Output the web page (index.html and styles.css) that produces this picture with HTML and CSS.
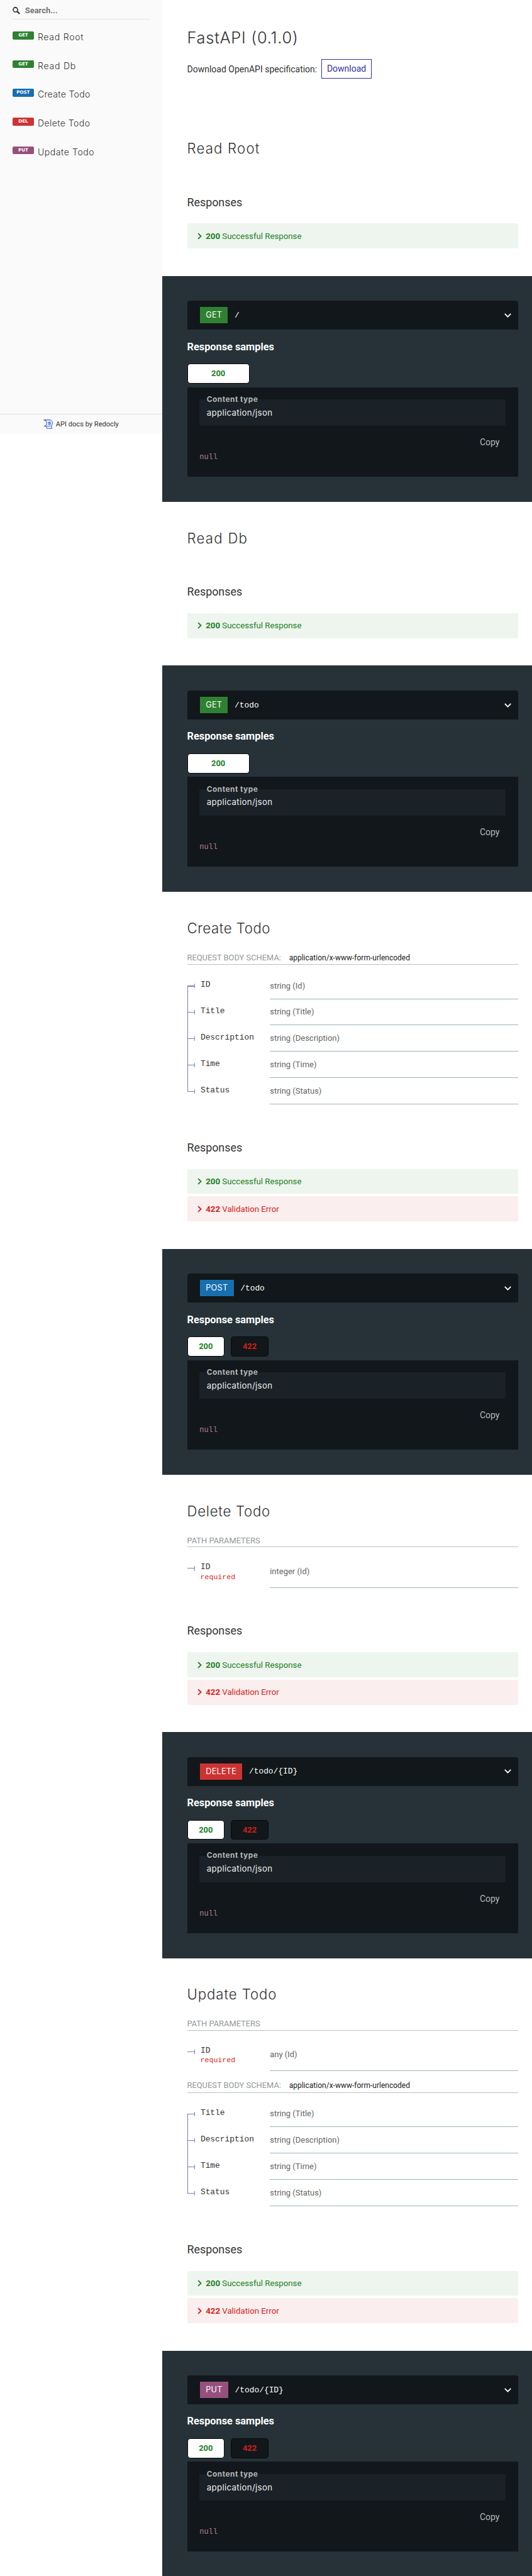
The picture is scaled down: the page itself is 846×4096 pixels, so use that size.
FILE: index.html
```html
<!DOCTYPE html>
<html lang="en">
<head>
<meta charset="utf-8">
<title>FastAPI - ReDoc</title>
<link rel="stylesheet" href="styles.css">
</head>
<body>
<svg class="defs" width="0" height="0">
  <symbol id="right" viewBox="0 0 9 14"><path d="M1.4 1.4 7 7 1.4 12.6" fill="none" stroke="currentColor" stroke-width="2.3"/></symbol>
  <symbol id="down" viewBox="0 0 14 9"><path d="M1 1.2 7 7.2 13 1.2" fill="none" stroke="currentColor" stroke-width="2.2"/></symbol>
</svg>
<div class="layout">
  <aside class="sidebar">
    <div class="search">
      <svg class="search-icon" viewBox="0 0 15 15"><circle cx="5.6" cy="5.6" r="4.5" fill="none" stroke="#222" stroke-width="1.9"/><path d="M8.9 8.9 14 14" stroke="#222" stroke-width="2.6"/></svg>
      <span>Search...</span>
    </div>
    <nav class="menu">
      <a class="item"><span class="tag get">GET</span><span class="label t-root">Read Root</span></a>
      <a class="item"><span class="tag get">GET</span><span class="label t-db">Read Db</span></a>
      <a class="item"><span class="tag post">POST</span><span class="label t-create">Create Todo</span></a>
      <a class="item"><span class="tag delete">DEL</span><span class="label t-delete">Delete Todo</span></a>
      <a class="item"><span class="tag put">PUT</span><span class="label t-update">Update Todo</span></a>
    </nav>
    <div class="credit">
      <svg class="logo" viewBox="0 0 19 19" fill="none" stroke="#2f66d8" stroke-width="1.3"><path d="M.5.8H12c3.600 0 6.200 2.600 6.200 6.200S15.500 13.600 12 13.600H1.200C4.600 12.800 6.700 10.400 6.700 7.200S4.400 1.300.5.8Z"/><path d="M9.400 5.200h5.200M9.400 7.400h6M9.400 9.600h5.200"/><path d="M5.300 13.800c1.200 1.300 1.400 4.300 3.300 4.300h9.300c-1.800-.8-1.800-2.800-1.700-5.400"/></svg>
      <span>API docs by Redocly</span>
    </div>
  </aside>
  <main class="content">
    <header class="intro">
      <h1>FastAPI (0.1.0)</h1>
      <p>Download OpenAPI specification:<a class="download">Download</a></p>
    </header>

    <section class="doc">
      <h2 class="t-root">Read Root</h2>
      <h3>Responses</h3>
      <div class="response ok"><svg><use href="#right"/></svg><b>200</b><span>Successful Response</span></div>
    </section>
    <section class="panel">
      <div class="endpoint"><span class="verb get">GET</span><code>/</code><svg><use href="#down"/></svg></div>
      <h4>Response samples</h4>
      <div class="tabs"><span class="tab single">200</span></div>
      <div class="sample"><div class="type"><b>Content type</b><span>application/json</span></div><div class="copy">Copy</div><code>null</code></div>
    </section>

    <section class="doc">
      <h2 class="t-db">Read Db</h2>
      <h3>Responses</h3>
      <div class="response ok"><svg><use href="#right"/></svg><b>200</b><span>Successful Response</span></div>
    </section>
    <section class="panel">
      <div class="endpoint"><span class="verb get">GET</span><code>/todo</code><svg><use href="#down"/></svg></div>
      <h4>Response samples</h4>
      <div class="tabs"><span class="tab single">200</span></div>
      <div class="sample"><div class="type"><b>Content type</b><span>application/json</span></div><div class="copy">Copy</div><code>null</code></div>
    </section>

    <section class="doc">
      <h2 class="t-create">Create Todo</h2>
      <h5 class="mime">Request Body schema: <span>application/x-www-form-urlencoded</span></h5>
      <div class="params">
        <div class="row thick"><div class="name">ID</div><div class="value">string (Id)</div></div>
        <div class="row"><div class="name">Title</div><div class="value">string (Title)</div></div>
        <div class="row"><div class="name">Description</div><div class="value">string (Description)</div></div>
        <div class="row"><div class="name">Time</div><div class="value">string (Time)</div></div>
        <div class="row"><div class="name">Status</div><div class="value">string (Status)</div></div>
      </div>
      <h3>Responses</h3>
      <div class="response ok"><svg><use href="#right"/></svg><b>200</b><span>Successful Response</span></div>
      <div class="response bad"><svg><use href="#right"/></svg><b>422</b><span>Validation Error</span></div>
    </section>
    <section class="panel">
      <div class="endpoint"><span class="verb post">POST</span><code>/todo</code><svg><use href="#down"/></svg></div>
      <h4>Response samples</h4>
      <div class="tabs"><span class="tab">200</span><span class="tab off">422</span></div>
      <div class="sample"><div class="type"><b>Content type</b><span>application/json</span></div><div class="copy">Copy</div><code>null</code></div>
    </section>

    <section class="doc">
      <h2 class="t-delete">Delete Todo</h2>
      <h5>path Parameters</h5>
      <div class="params">
        <div class="row tall"><div class="name">ID<small>required</small></div><div class="value">integer (Id)</div></div>
      </div>
      <h3>Responses</h3>
      <div class="response ok"><svg><use href="#right"/></svg><b>200</b><span>Successful Response</span></div>
      <div class="response bad"><svg><use href="#right"/></svg><b>422</b><span>Validation Error</span></div>
    </section>
    <section class="panel">
      <div class="endpoint"><span class="verb delete">DELETE</span><code>/todo/{ID}</code><svg><use href="#down"/></svg></div>
      <h4>Response samples</h4>
      <div class="tabs"><span class="tab">200</span><span class="tab off">422</span></div>
      <div class="sample"><div class="type"><b>Content type</b><span>application/json</span></div><div class="copy">Copy</div><code>null</code></div>
    </section>

    <section class="doc">
      <h2 class="t-update">Update Todo</h2>
      <h5>path Parameters</h5>
      <div class="params">
        <div class="row tall"><div class="name">ID<small>required</small></div><div class="value">any (Id)</div></div>
      </div>
      <h5 class="mime next">Request Body schema: <span>application/x-www-form-urlencoded</span></h5>
      <div class="params">
        <div class="row"><div class="name">Title</div><div class="value">string (Title)</div></div>
        <div class="row"><div class="name">Description</div><div class="value">string (Description)</div></div>
        <div class="row"><div class="name">Time</div><div class="value">string (Time)</div></div>
        <div class="row"><div class="name">Status</div><div class="value">string (Status)</div></div>
      </div>
      <h3>Responses</h3>
      <div class="response ok"><svg><use href="#right"/></svg><b>200</b><span>Successful Response</span></div>
      <div class="response bad"><svg><use href="#right"/></svg><b>422</b><span>Validation Error</span></div>
    </section>
    <section class="panel last">
      <div class="endpoint"><span class="verb put">PUT</span><code>/todo/{ID}</code><svg><use href="#down"/></svg></div>
      <h4>Response samples</h4>
      <div class="tabs"><span class="tab">200</span><span class="tab off">422</span></div>
      <div class="sample"><div class="type"><b>Content type</b><span>application/json</span></div><div class="copy">Copy</div><code>null</code></div>
    </section>
  </main>
</div>
</body>
</html>
```
FILE: styles.css
```css
* { box-sizing: border-box; }
html { font-size: 7.934px; }
body {
  margin: 0;
  height: 4096px;
  overflow: hidden;
  background: #fff;
  color: #333;
  font-family: Roboto, "Liberation Sans", sans-serif;
  font-size: 1.765rem;
}
h1, h2, h3, h4, h5, p { margin: 0; font-weight: 400; }
code, .name { font-family: "Liberation Mono", "Courier New", monospace; }
.defs { display: block; position: absolute; }
.layout { display: flex; align-items: flex-start; }

.get { background: #2f8132; }
.post { background: #186faf; }
.delete { background: #cc3333; }
.put { background: #95507c; }

/* Tracking of the operation titles */
.t-root { letter-spacing: .053em; }
.t-db { letter-spacing: .056em; }
.t-create { letter-spacing: .024em; }
.t-delete { letter-spacing: .032em; }
.t-update { letter-spacing: .041em; }

/* Sidebar */
.sidebar {
  display: flex;
  flex-direction: column;
  width: 32.5rem;
  height: 86.9rem;
  background: #fafafa;
}
.search {
  display: flex;
  align-items: center;
  gap: 1rem;
  margin: .5rem 2.5rem 0;
  height: 3.4rem;
  border-bottom: 1px solid #e1e1e1;
  font-size: 1.64rem;
  font-weight: 700;
  color: #757575;
}
.search-icon { width: 1.5rem; height: 1.5rem; }
.menu { flex: 1; padding-top: .6rem; }
.item { display: flex; height: 5.755rem; padding: 1.8rem 0 0 2.5rem; gap: .75rem; }
.tag {
  width: 4.3rem;
  height: 1.6rem;
  border-radius: .25rem;
  color: #fff;
  font: 700 .89rem/1.6rem "DejaVu Sans", sans-serif;
  text-align: center;
}
.label {
  font: 300 1.77rem/2.2rem Inter, sans-serif;
  white-space: nowrap;
}
.credit {
  display: flex;
  align-items: center;
  justify-content: center;
  gap: .6rem;
  height: 4rem;
  border-top: 1px solid #e1e1e1;
  font-size: 1.4rem;
}
.logo { width: 1.9rem; height: 1.9rem; }

/* Documentation column */
.content { flex: 1; }
.intro { height: 22.5rem; padding: 5.32rem 5rem 0; }
h1 { font: 300 3.2rem/4.5rem Inter, sans-serif; letter-spacing: .096rem; }
.intro p { display: flex; align-items: center; margin-top: 2.08rem; }
.download {
  margin-left: .9rem;
  height: 3.9rem;
  padding: 0 .95rem;
  border: 1px solid #32329f;
  color: #32329f;
  line-height: 3.75rem;
}
.doc { padding: 5.24rem 2.8rem 5.5rem 5rem; }
h2 { font: 300 2.8rem/4rem Inter, sans-serif; }
h3 { margin: 7.29rem 0 2.77rem; font-size: 2.25rem; line-height: 3rem; }
.params + h3 { margin-top: 7.18rem; }
.response {
  display: flex;
  align-items: center;
  height: 5rem;
  padding-left: 2.1rem;
  border-radius: .25rem;
  font-size: 1.667rem;
}
.response svg { width: .9rem; height: 1.4rem; }
.response b { margin: 0 .42rem 0 .75rem; }
.response + .response { margin-top: .5rem; }
.ok { background: #eef5ee; color: #1d8127; }
.bad { background: #fbeeee; color: #d41f1c; }

/* Parameter tables */
h5 {
  height: 5.26rem;
  padding-top: 3.2rem;
  border-bottom: 1px solid #bcbfc1;
  color: #92989b;
  font-size: 1.625rem;
  line-height: 1.4rem;
  text-transform: uppercase;
}
h5.mime { height: 5.38rem; }
h5.next { height: 4.38rem; padding-top: 2.2rem; }
h5 span { margin-left: 1.2rem; color: #222; font-size: 1.515rem; text-transform: none; }
.params { padding-top: 1.6rem; }
.row { display: flex; height: 5.28rem; }
.row.tall { height: 6.5rem; }
.name {
  position: relative;
  width: 16.6rem;
  padding: 1.45rem 0 0 2.7rem;
  font-size: 1.625rem;
  line-height: 2rem;
}
.name small { display: block; margin: -.05rem 0 0 -.05rem; color: #d41f1c; font-size: 1.4625rem; }
.value {
  flex: 1;
  display: flex;
  align-items: center;
  border-bottom: 1px solid #9fb4be;
  color: #666;
  font-size: 1.635rem;
}
/* Branch and tick of the property tree */
.name::before {
  content: "";
  position: absolute;
  left: 0;
  top: 2.2rem;
  width: 1.4rem;
  height: .9rem;
  border-right: 1px solid #7c7cbb;
  background: linear-gradient(#7c7cbb, #7c7cbb) 0 50% / 100% 1px no-repeat;
}
.thick .name::before { background-size: 100% 2px; }
.row:not(:last-child) .name::after {
  content: "";
  position: absolute;
  left: 0;
  top: 2.65rem;
  height: 5.28rem;
  border-left: 1px solid #7c7cbb;
}

/* Sample panels */
.panel {
  height: 45.32rem;
  padding: 5rem 2.8rem 0 5rem;
  background: #263238;
  color: #fff;
}
.panel.last { height: 46rem; }
.endpoint {
  display: flex;
  align-items: center;
  height: 5.8rem;
  padding: 0 1.3rem 0 2.6rem;
  border-radius: .5rem .5rem 0 0;
  background: #11171a;
}
.verb {
  padding: 0 1.15rem;
  height: 3.25rem;
  font: 400 1.6rem/3.3rem Inter, sans-serif;
  letter-spacing: .02em;
}
.endpoint code { flex: 1; margin-left: 1.35rem; font-size: 1.625rem; }
.endpoint svg { width: 1.4rem; height: .9rem; }
h4 { margin: 1.92rem 0 1.88rem; font-size: 2.06rem; font-weight: 700; line-height: 3rem; }
.tabs { display: flex; gap: 1.3rem; }
.tab {
  width: 7.5rem;
  height: 4rem;
  border: 1px solid #07090b;
  border-radius: .6rem;
  background: #fff;
  color: #1d8127;
  font-size: 1.625rem;
  font-weight: 700;
  line-height: 3.75rem;
  text-align: center;
}
.tab.single { width: 12.5rem; }
.tab.off { background: #11171a; color: #d41f1c; }
.sample {
  height: 18rem;
  margin-top: .7rem;
  padding: 2.5rem 2.5rem 0;
  background: #11171a;
}
.type {
  display: flex;
  flex-direction: column;
  height: 5.3rem;
  padding-left: 1.45rem;
  background: #1a2127;
  font-family: Inter, sans-serif;
}
.type b { margin-top: -1.08rem; color: #b4b6b7; font-size: 1.5rem; font-weight: 700; line-height: 2rem; letter-spacing: .04em; }
.type span { margin-top: .5rem; color: #eee; font-size: 1.67rem; line-height: 2.4rem; letter-spacing: .025em; }
.copy { margin-top: 2.15rem; padding-right: 1.2rem; color: #b8b9ba; line-height: 2.5rem; text-align: right; }
.sample code { display: block; margin-top: .75rem; color: #b97f88; font-size: 1.5rem; line-height: 2rem; }
```
